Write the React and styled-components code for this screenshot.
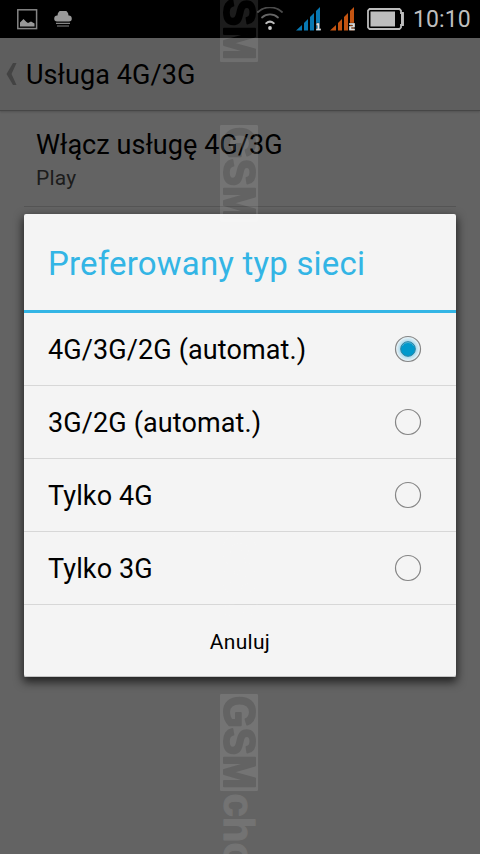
import React from 'react';
import styled, { createGlobalStyle } from 'styled-components';

const GlobalStyle = createGlobalStyle`
  * { box-sizing: border-box; }
  body { margin: 0; background: #636363; }
`;

const Screen = styled.main`
  position: relative;
  width: 480px;
  height: 854px;
  overflow: hidden;
  background: #636363;
  color: #000;
  font-family: Roboto, 'Noto Sans', sans-serif;
`;

const StatusBar = styled.header`
  display: flex;
  align-items: center;
  justify-content: space-between;
  height: 38px;
  padding: 0 10px 0 17px;
  background: #000;
  color: #bebebe;
`;

const StatusGroup = styled.div`
  display: flex;
  align-items: center;
  height: 38px;
`;

const StatusIcon = styled.svg`
  display: block;
  flex: none;
  margin-left: ${(p) => p.$gap || 0}px;
`;

const Clock = styled.span`
  width: 57px;
  height: 38px;
  margin-left: 9px;
  font-size: 23px;
  line-height: 40px;
  letter-spacing: 0.1px;
  white-space: nowrap;
`;

const ActionBar = styled.nav`
  display: flex;
  align-items: center;
  height: 73px;
  padding-left: 6px;
  background: #5e5e5e;
  border-bottom: 1px solid #464646;
  box-shadow: 0 1px 2px rgba(0, 0, 0, 0.18);
`;

const ScreenTitle = styled.h1`
  margin: 2px 0 0 9px;
  font-size: 27px;
  font-weight: 400;
  line-height: 32px;
  letter-spacing: 0.08px;
`;

const Preference = styled.section`
  height: 96px;
  margin: 0 24px;
  padding: 17px 12px 0;
  border-bottom: 1px solid #555;
`;

const PreferenceTitle = styled.div`
  font-size: 27px;
  line-height: 34px;
  letter-spacing: 0.06px;
`;

const PreferenceSummary = styled.div`
  color: #1c1c1c;
  font-size: 21px;
  line-height: 32px;
  letter-spacing: 0.2px;
`;

const Dialog = styled.div`
  position: absolute;
  top: 214px;
  left: 24px;
  width: 432px;
  height: 463px;
  border-radius: 2px;
  background: #f4f4f4;
  box-shadow: inset 0 -1px 0 #c4c4c4, 0 4px 10px 1px rgba(0, 0, 0, 0.68);
`;

const DialogTitle = styled.h2`
  height: 99px;
  margin: 0;
  padding-left: 24px;
  border-bottom: 3px solid #33b5e5;
  color: #33b5e5;
  font-size: 33px;
  font-weight: 400;
  line-height: 99px;
  letter-spacing: 0.19px;
`;

const Option = styled.div`
  display: flex;
  align-items: center;
  justify-content: space-between;
  height: 73px;
  padding: 0 34px 0 24px;
  border-bottom: 1px solid #d7d7d7;
  font-size: 27px;
`;

const OptionLabel = styled.span`
  padding-top: 2px;
  letter-spacing: 0.11px;
`;

const CancelButton = styled.button`
  display: block;
  width: 100%;
  height: 72px;
  padding: 1px 0 0;
  border: 0;
  background: transparent;
  color: #000;
  font: 400 21px Roboto, 'Noto Sans', sans-serif;
  letter-spacing: 0.3px;
`;

const WatermarkLayer = styled.svg`
  position: absolute;
  top: 0;
  left: 0;
  pointer-events: none;
`;

function Radio({ checked }) {
  return (
    <svg width="28" height="28" viewBox="0 0 28 28">
      <defs>
        <radialGradient id="halo">
          <stop offset="0.55" stopColor="#9dd5eb" />
          <stop offset="0.9" stopColor="#e1eff5" />
        </radialGradient>
      </defs>
      <circle cx="14" cy="14" r="12.5" fill={checked ? 'url(#halo)' : 'none'} stroke="#858585" strokeWidth="1.2" />
      {checked && <circle cx="14" cy="14" r="7.3" fill="#0099cc" stroke="#2d83a2" strokeWidth="1" />}
      {checked && <path d="M8.2 11a6.5 6.5 0 0 1 11.6 0" fill="none" stroke="#5db2cf" strokeWidth="0.8" />}
    </svg>
  );
}

function Signal({ color, slot, gap }) {
  return (
    <StatusIcon width="26" height="24" viewBox="0 0 26 24" $gap={gap}>
      <path d="M0 23.5 6 18v5.500ZM8 16l4-4v11.500H8ZM14 10l4-4v17.500h-4ZM20 4l4-4v23.500h-4Z" fill={color} />
      {slot === 1 ? (
        <path d="M20.500 16h3v5.500h1.500v2h-5v-2h1.300v-3h-1.300Z" fill="#ddd" stroke="#000" strokeWidth="0.3" />
      ) : (
        <path d="M19 16h6v4.500h-3.500v1H25v2h-6v-4.500h3.500v-1H19Z" fill="#ddd" stroke="#000" strokeWidth="0.3" />
      )}
    </StatusIcon>
  );
}

function Stamp({ id, y, suffix, faint }) {
  return (
    <g transform={`translate(258.500 ${y}) rotate(90)`} opacity={faint ? 0.5 : 1}>
      <mask id={id} maskUnits="userSpaceOnUse" x="0" y="0" width="98" height="39">
        <rect width="98" height="39" rx="3" fill="#fff" />
        <text
          x="2.5"
          y="34.500"
          textLength="93"
          lengthAdjust="spacingAndGlyphs"
          fontFamily="Liberation Sans, sans-serif"
          fontWeight="700"
          fontSize="44"
          fill="#000"
          stroke="#000"
          strokeWidth="2"
          strokeLinejoin="round"
        >
          GSM
        </text>
      </mask>
      <rect width="98" height="39" rx="3" fill="#fff" fillOpacity="0.11" mask={`url(#${id})`} />
      {suffix && (
        <text
          x="100"
          y="34.500"
          fontFamily="Liberation Sans, sans-serif"
          fontWeight="700"
          fontSize="42"
          fill="#737373"
          stroke="#737373"
          strokeWidth="1.2"
          strokeLinejoin="round"
        >
          {suffix}
        </text>
      )}
    </g>
  );
}

const options = ['4G/3G/2G (automat.)', '3G/2G (automat.)', 'Tylko 4G', 'Tylko 3G'];

export default function App() {
  return (
    <>
      <GlobalStyle />
      <Screen>
        <StatusBar>
          <StatusGroup>
            <StatusIcon width="21" height="21" viewBox="0 0 21 21">
              <rect x="0.8" y="0.8" width="18.800" height="18.800" fill="none" stroke="#858585" strokeWidth="1.5" />
              <path d="M3 17.500v-4l3.500-3.500 3 3 1.500 1 3-1.500 3.500 2v3Z" fill="#999" />
            </StatusIcon>
            <StatusIcon width="18" height="16" viewBox="0 0 18 16" $gap={16}>
              <path d="M3 10.500a3 3 0 0 1 .5-6 5.500 5.500 0 0 1 11 0 3 3 0 0 1 .500 6Z" fill="#999" />
              <path d="M2 12.300h14M3 15h12" stroke="#858585" strokeWidth="1.2" />
            </StatusIcon>
          </StatusGroup>
          <StatusGroup>
            <StatusIcon width="26" height="24" viewBox="0 0 26 24">
              <g fill="none" strokeLinecap="round" strokeWidth="1.8">
                <path d="M1 5a18 18 0 0 1 24 0" stroke="#4b4b4b" />
                <path d="M5 10.500a12 12 0 0 1 16 0" stroke="#666" />
                <path d="M9.200 16.200a6 6 0 0 1 7.600 0" stroke="#bbb" strokeWidth="2" />
              </g>
              <circle cx="13" cy="21" r="1.900" fill="#ccc" />
            </StatusIcon>
            <Signal color="#0878b2" slot={1} gap={13} />
            <Signal color="#c45411" slot={2} gap={8} />
            <StatusIcon width="37" height="22" viewBox="0 0 37 22" $gap={11}>
              <path d="M2.500 1h30l1.500 1.500V5h2v12h-2v2.500L32.500 21h-30L1 19.500v-17Z" fill="none" stroke="#bdbdbd" strokeWidth="1.800" />
              <path d="M34 5h2.500v12H34Z" fill="#bdbdbd" />
              <path d="M3.500 3.500h24.500v15h-24.500Z" fill="#bebebe" />
            </StatusIcon>
            <Clock>10:10</Clock>
          </StatusGroup>
        </StatusBar>
        <ActionBar>
          <svg width="11" height="22" viewBox="0 0 11 22">
            <path d="M7 0h3.500L5.500 11l5 11H7L.500 11Z" fill="#434343" />
          </svg>
          <ScreenTitle>Usługa 4G/3G</ScreenTitle>
        </ActionBar>
        <Preference>
          <PreferenceTitle>Włącz usługę 4G/3G</PreferenceTitle>
          <PreferenceSummary>Play</PreferenceSummary>
        </Preference>
        <Dialog role="dialog">
          <DialogTitle>Preferowany typ sieci</DialogTitle>
          {options.map((label, index) => (
            <Option key={label}>
              <OptionLabel>{label}</OptionLabel>
              <Radio checked={index === 0} />
            </Option>
          ))}
          <CancelButton>Anuluj</CancelButton>
        </Dialog>
        <WatermarkLayer width="480" height="854" viewBox="0 0 480 854">
          <Stamp id="stamp-top" y={-35.500} />
          <Stamp id="stamp-preference" y={124.500} />
          <Stamp id="stamp-option" y={532} faint />
          <Stamp id="stamp-bottom" y={693.500} suffix="cho" />
        </WatermarkLayer>
      </Screen>
    </>
  );
}
